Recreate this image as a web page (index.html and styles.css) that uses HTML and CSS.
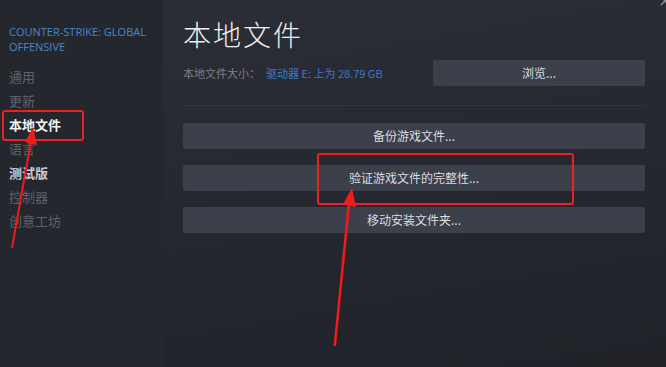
FILE: index.html
```html
<!DOCTYPE html>
<html>
<head>
<meta charset="utf-8">
<link rel="stylesheet" href="styles.css">
</head>
<body>
<div class="app">
  <aside class="sidebar">
    <div class="game">COUNTER-STRIKE: GLOBAL OFFENSIVE</div>
    <nav class="nav">
      <div class="item">通用</div>
      <div class="item">更新</div>
      <div class="item active">本地文件</div>
      <div class="item">语言</div>
      <div class="item bright">测试版</div>
      <div class="item">控制器</div>
      <div class="item">创意工坊</div>
    </nav>
  </aside>
  <main class="main">
    <h1 class="title">本地文件</h1>
    <div class="sizerow">
      <div class="sizeinfo"><span class="label">本地文件大小：</span><span class="value">驱动器 E: 上为 28.79 GB</span></div>
      <div class="btn browse">浏览...</div>
    </div>
    <div class="divider"></div>
    <div class="actions">
      <div class="btn">备份游戏文件...</div>
      <div class="btn">验证游戏文件的完整性...</div>
      <div class="btn">移动安装文件夹...</div>
    </div>
  </main>
</div>
<svg class="close" width="10" height="10" viewBox="0 0 10 10"><path d="M1 -3 L9 5 M9 -3 L1 5" stroke="#8a9098" stroke-width="1.4"/></svg>
<div class="mark mark-nav"></div>
<div class="mark mark-verify"></div>
<svg class="arrows" width="666" height="367" viewBox="0 0 666 367">
  <polygon points="11,248 13,248 31.5,144 37,145 33,127 25,142 29.5,143.5" fill="#f21a1a"/>
  <polygon points="333.5,346 336,346 350,206 356,207 352,188 343,204 347.5,205" fill="#f21a1a"/>
</svg>
</body>
</html>
```
FILE: styles.css
```css
html, body {
  margin: 0;
  padding: 0;
  width: 666px;
  height: 367px;
  overflow: hidden;
  font-family: "Noto Sans CJK SC", "Noto Sans", sans-serif;
}
.app {
  display: flex;
  width: 666px;
  height: 367px;
}
.sidebar {
  width: 163px;
  flex: none;
  background: #25272e;
  padding: 24px 0 0 9px;
  box-sizing: border-box;
}
.game {
  color: #4a86c8;
  font-family: "Open Sans", "Noto Sans", sans-serif;
  font-size: 11px;
  line-height: 15px;
  width: 150px;
  text-transform: uppercase;
}
.nav {
  margin-top: 11px;
  display: flex;
  flex-direction: column;
}
.item {
  color: #5f636b;
  font-size: 13px;
  line-height: 24px;
  height: 24px;
}
.item.active {
  color: #f2f2f2;
  font-weight: 700;
}
.item.bright {
  color: #c8cacd;
  font-weight: 700;
}
.main {
  flex: 1;
  background: linear-gradient(170deg, #2b2e37 0%, #252831 50%, #202228 100%);
  padding: 16px 21px 0 20px;
  display: flex;
  flex-direction: column;
}
.title {
  margin: 0;
  color: #f0f0f0;
  font-weight: 300;
  font-size: 28px;
  line-height: 36px;
  letter-spacing: 2px;
}
.sizerow {
  display: flex;
  align-items: center;
  justify-content: space-between;
  margin-top: 8px;
}
.sizeinfo {
  font-size: 11px;
}
.label {
  color: #7d8089;
  margin-right: 6px;
}
.value {
  color: #3d79c7;
}
.btn {
  background: #3b404b;
  color: #dcdde0;
  font-size: 12px;
  height: 26px;
  line-height: 26px;
  text-align: center;
  border-radius: 2px;
}
.browse {
  width: 212px;
}
.divider {
  height: 1px;
  background: #33363f;
  margin-top: 19px;
}
.actions {
  display: flex;
  flex-direction: column;
  gap: 16px;
  margin-top: 17px;
}
.close {
  position: absolute;
  right: -4px;
  top: 0;
}
.mark {
  position: absolute;
  border: 2px solid #ee2020;
  border-radius: 3px;
  box-sizing: border-box;
}
.mark-nav {
  left: 2px;
  top: 110px;
  width: 82px;
  height: 31px;
}
.mark-verify {
  left: 317px;
  top: 153px;
  width: 257px;
  height: 52px;
}
.arrows {
  position: absolute;
  left: 0;
  top: 0;
  pointer-events: none;
}
```
